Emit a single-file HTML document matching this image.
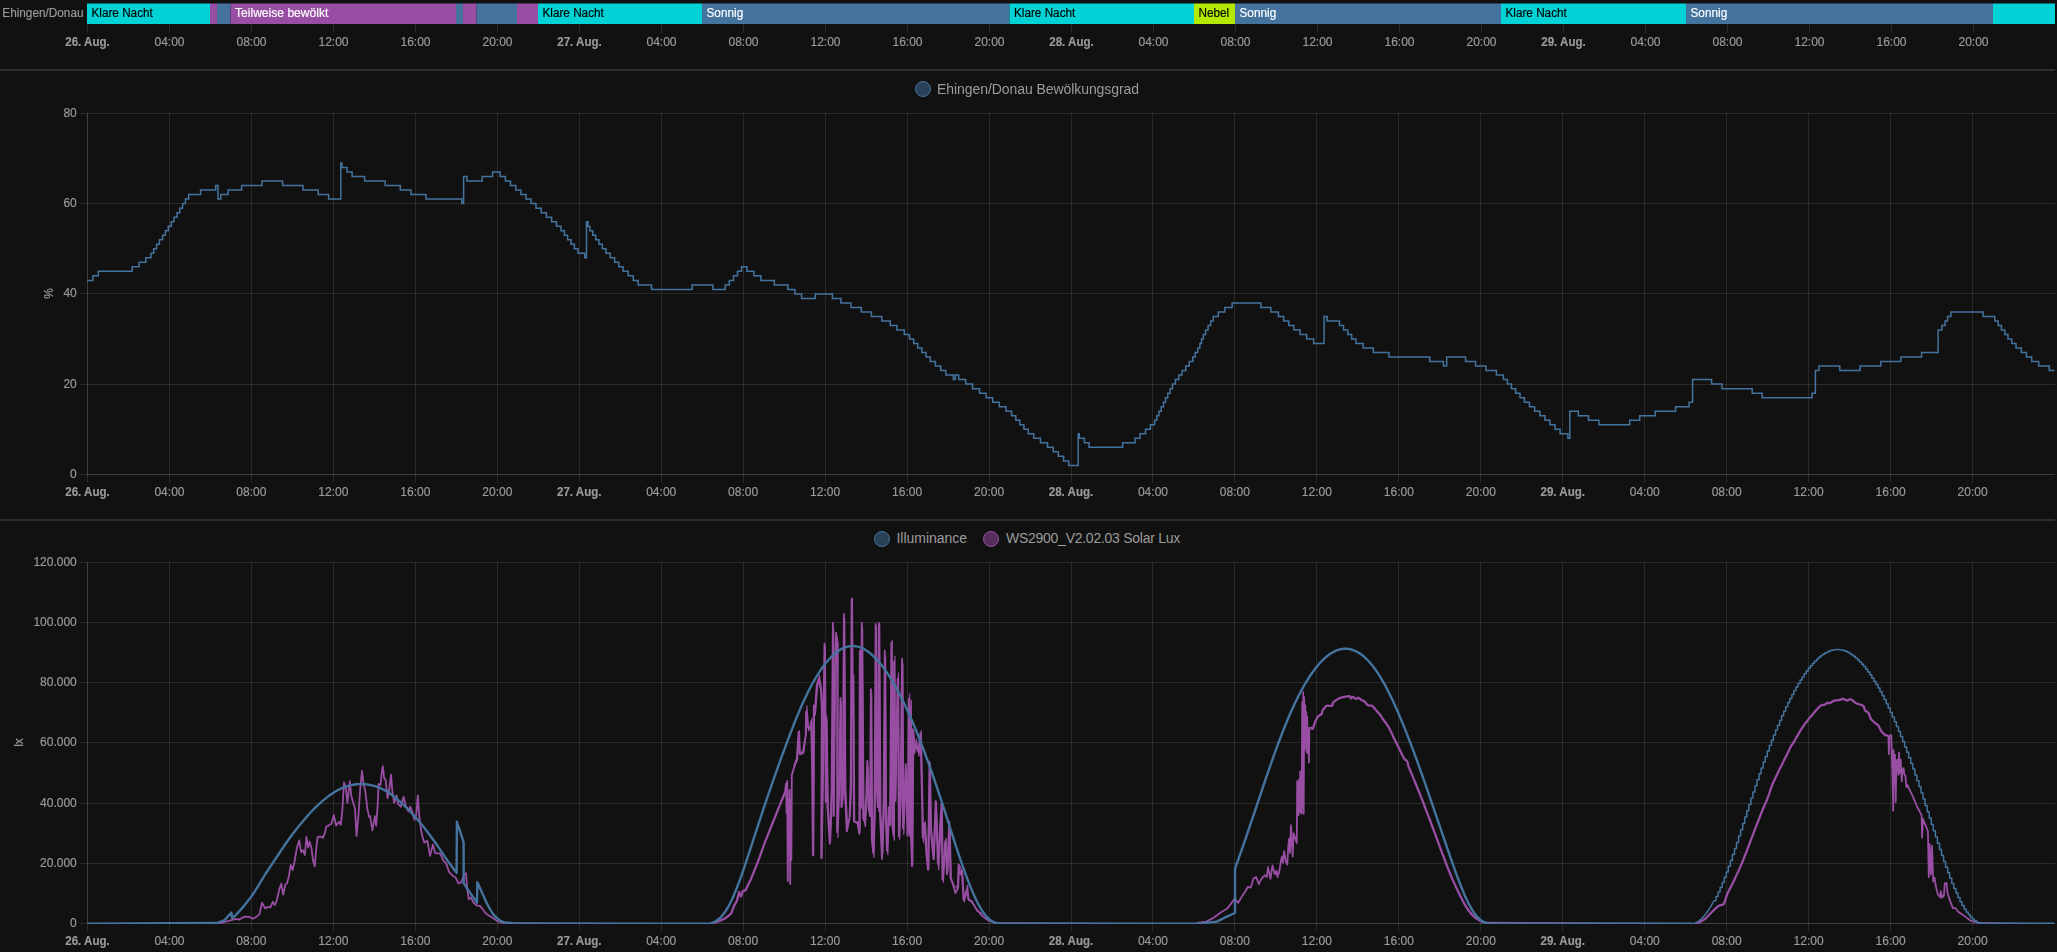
<!DOCTYPE html>
<html><head><meta charset="utf-8"><title>History</title>
<style>
html,body{margin:0;padding:0;background:#111111;width:2057px;height:952px;overflow:hidden}
svg{display:block}
text{font-family:"Liberation Sans",sans-serif}
.g{fill:#e1e1e1;fill-opacity:.12}
body{position:relative}
div.lg{position:absolute;font:14px/16px "Liberation Sans",sans-serif;color:#9b9b9b;white-space:nowrap}
</style></head><body>
<svg width="2057" height="952" viewBox="0 0 2057 952">
<defs><clipPath id="c2"><rect x="87.5" y="555" width="1967.1" height="369"/></clipPath></defs>
<rect width="2057" height="952" fill="#111111"/>
<rect x="87" y="3.5" width="123" height="20.5" fill="#00d2d5"/>
<rect x="210" y="3.5" width="7" height="20.5" fill="#984ea3"/>
<rect x="217" y="3.5" width="13.5" height="20.5" fill="#44739e"/>
<rect x="230.5" y="3.5" width="225.5" height="20.5" fill="#984ea3"/>
<rect x="456" y="3.5" width="7" height="20.5" fill="#44739e"/>
<rect x="463" y="3.5" width="13.5" height="20.5" fill="#984ea3"/>
<rect x="476.5" y="3.5" width="40.5" height="20.5" fill="#44739e"/>
<rect x="517" y="3.5" width="21" height="20.5" fill="#984ea3"/>
<rect x="538" y="3.5" width="164" height="20.5" fill="#00d2d5"/>
<rect x="702" y="3.5" width="307.5" height="20.5" fill="#44739e"/>
<rect x="1009.5" y="3.5" width="184.5" height="20.5" fill="#00d2d5"/>
<rect x="1194" y="3.5" width="41" height="20.5" fill="#b3e900"/>
<rect x="1235" y="3.5" width="266" height="20.5" fill="#44739e"/>
<rect x="1501" y="3.5" width="185" height="20.5" fill="#00d2d5"/>
<rect x="1686" y="3.5" width="307" height="20.5" fill="#44739e"/>
<rect x="1993" y="3.5" width="62" height="20.5" fill="#00d2d5"/>
<rect x="87" y="24" width="1" height="8.8" class="g"/>
<rect x="169" y="24" width="1" height="8.8" class="g"/>
<rect x="251" y="24" width="1" height="8.8" class="g"/>
<rect x="333" y="24" width="1" height="8.8" class="g"/>
<rect x="415" y="24" width="1" height="8.8" class="g"/>
<rect x="497" y="24" width="1" height="8.8" class="g"/>
<rect x="579" y="24" width="1" height="8.8" class="g"/>
<rect x="661" y="24" width="1" height="8.8" class="g"/>
<rect x="743" y="24" width="1" height="8.8" class="g"/>
<rect x="825" y="24" width="1" height="8.8" class="g"/>
<rect x="907" y="24" width="1" height="8.8" class="g"/>
<rect x="989" y="24" width="1" height="8.8" class="g"/>
<rect x="1071" y="24" width="1" height="8.8" class="g"/>
<rect x="1153" y="24" width="1" height="8.8" class="g"/>
<rect x="1235" y="24" width="1" height="8.8" class="g"/>
<rect x="1317" y="24" width="1" height="8.8" class="g"/>
<rect x="1399" y="24" width="1" height="8.8" class="g"/>
<rect x="1481" y="24" width="1" height="8.8" class="g"/>
<rect x="1563" y="24" width="1" height="8.8" class="g"/>
<rect x="1645" y="24" width="1" height="8.8" class="g"/>
<rect x="1727" y="24" width="1" height="8.8" class="g"/>
<rect x="1809" y="24" width="1" height="8.8" class="g"/>
<rect x="1891" y="24" width="1" height="8.8" class="g"/>
<rect x="1973" y="24" width="1" height="8.8" class="g"/>
<rect x="0" y="69" width="2055" height="2" fill="#2e2e2e"/>
<rect x="0" y="519" width="2055" height="2" fill="#2e2e2e"/>
<rect x="87" y="113" width="1" height="369.7" class="g"/>
<rect x="169" y="113" width="1" height="369.7" class="g"/>
<rect x="251" y="113" width="1" height="369.7" class="g"/>
<rect x="333" y="113" width="1" height="369.7" class="g"/>
<rect x="415" y="113" width="1" height="369.7" class="g"/>
<rect x="497" y="113" width="1" height="369.7" class="g"/>
<rect x="579" y="113" width="1" height="369.7" class="g"/>
<rect x="661" y="113" width="1" height="369.7" class="g"/>
<rect x="743" y="113" width="1" height="369.7" class="g"/>
<rect x="825" y="113" width="1" height="369.7" class="g"/>
<rect x="907" y="113" width="1" height="369.7" class="g"/>
<rect x="989" y="113" width="1" height="369.7" class="g"/>
<rect x="1071" y="113" width="1" height="369.7" class="g"/>
<rect x="1152" y="113" width="1" height="369.7" class="g"/>
<rect x="1234" y="113" width="1" height="369.7" class="g"/>
<rect x="1316" y="113" width="1" height="369.7" class="g"/>
<rect x="1398" y="113" width="1" height="369.7" class="g"/>
<rect x="1480" y="113" width="1" height="369.7" class="g"/>
<rect x="1562" y="113" width="1" height="369.7" class="g"/>
<rect x="1644" y="113" width="1" height="369.7" class="g"/>
<rect x="1726" y="113" width="1" height="369.7" class="g"/>
<rect x="1808" y="113" width="1" height="369.7" class="g"/>
<rect x="1890" y="113" width="1" height="369.7" class="g"/>
<rect x="1972" y="113" width="1" height="369.7" class="g"/>
<rect x="87" y="113" width="1" height="362" class="g"/>
<rect x="80" y="113" width="1975" height="1" class="g"/>
<rect x="80" y="203" width="1975" height="1" class="g"/>
<rect x="80" y="293" width="1975" height="1" class="g"/>
<rect x="80" y="384" width="1975" height="1" class="g"/>
<rect x="80" y="474" width="1975" height="1" class="g"/>
<rect x="87" y="474" width="1968" height="1" class="g"/>
<circle cx="923" cy="89" r="7.5" fill="#44739e" fill-opacity="0.5" stroke="#44739e" stroke-width="1"/>
<path d="M87.0 280.4H92.9V275.8H98.3V271.3H132.2V266.8H139.2V262.3H145.8V257.8H150.9V253.3H153.7V248.8H156.6V244.3H159.4V239.7H162.6V235.2H165.4V230.7H168.3V226.2H171.3V221.7H174.0V217.2H177.0V212.7H179.8V208.2H182.6V203.6H185.5V199.1H188.7V194.6H200.6V190.1H215.7V185.6H218.0V199.1H220.8V194.6H228.0V190.1H241.6V185.6H262.0V181.1H282.6V185.6H303.0V190.1H318.2V194.6H328.6V199.1H340.8V163.0H341.9V167.5H347.0V172.1H352.1V176.6H364.6V181.1H385.2V185.6H400.3V190.1H410.9V194.6H426.0V199.1H461.8V203.6H463.6V176.6H467.0V181.1H482.2V176.6H492.6V172.1H500.1V176.6H505.4V181.1H510.5V185.6H515.8V190.1H520.9V194.6H526.0V199.1H531.0V203.6H536.0V208.2H541.2V212.7H546.4V217.2H551.6V221.7H556.5V226.2H561.0V230.7H564.4V235.2H567.6V239.7H571.0V244.3H574.4V248.8H578.0V253.3H584.7V257.8H586.5V221.7H588.0V226.2H589.8V230.7H592.7V235.2H595.7V239.7H598.9V244.3H602.3V248.8H605.9V253.3H610.2V257.8H614.6V262.3H618.8V266.8H623.1V271.3H628.2V275.8H633.3V280.4H638.2V284.9H651.5V289.4H692.1V284.9H712.9V289.4H725.2V284.9H729.3V280.4H733.5V275.8H737.5V271.3H741.6V266.8H746.9V271.3H753.9V275.8H760.9V280.4H774.3V284.9H787.9V289.4H794.9V293.9H801.6V298.4H815.3V293.9H832.4V298.4H840.9V302.9H850.9V307.4H861.3V311.9H871.4V316.5H881.8V321.0H890.3V325.5H896.9V330.0H904.3V334.5H909.5V339.0H913.7V343.5H917.7V348.0H921.8V352.6H926.0V357.1H930.3V361.6H935.4V366.1H940.7V370.6H945.8V375.1H953.4V379.6H955.3V375.1H958.7V379.6H965.7V384.1H972.5V388.7H979.5V393.2H986.1V397.7H992.7V402.2H999.3V406.7H1006.0V411.2H1011.6V415.7H1015.8V420.2H1019.8V424.8H1023.9V429.3H1028.3V433.8H1033.7V438.3H1040.5V442.8H1047.5V447.3H1053.2V451.8H1058.3V456.3H1063.6V460.9H1068.7V465.4H1078.2V433.8H1079.3V438.3H1084.4V442.8H1089.1V447.3H1122.6V442.8H1135.1V438.3H1140.0V433.8H1145.5V429.3H1150.4V424.8H1154.6V420.2H1156.8V415.7H1158.9V411.2H1161.2V406.7H1163.5V402.2H1165.5V397.7H1167.8V393.2H1170.1V388.7H1172.5V384.1H1175.4V379.6H1178.8V375.1H1182.0V370.6H1185.8V366.1H1189.2V361.6H1192.8V357.1H1195.2V352.6H1197.7V348.0H1199.9V343.5H1201.5V339.0H1203.3V334.5H1205.6V330.0H1208.1V325.5H1210.7V321.0H1213.2V316.5H1218.3V311.9H1224.9V307.4H1232.1V302.9H1260.8V307.4H1270.8V311.9H1278.4V316.5H1283.7V321.0H1288.8V325.5H1293.9V330.0H1300.1V334.5H1306.7V339.0H1313.7V343.5H1324.1V316.5H1327.2V321.0H1339.5V325.5H1343.6V330.0H1347.8V334.5H1351.7V339.0H1355.9V343.5H1363.1V348.0H1373.3V352.6H1389.0V357.1H1429.7V361.6H1443.5V366.1H1446.7V357.1H1465.6V361.6H1475.6V366.1H1486.0V370.6H1496.4V375.1H1503.4V379.6H1507.4V384.1H1511.5V388.7H1515.7V393.2H1520.0V397.7H1524.4V402.2H1529.5V406.7H1534.6V411.2H1539.9V415.7H1545.0V420.2H1549.9V424.8H1555.0V429.3H1560.1V433.8H1567.9V438.3H1569.8V411.2H1578.3V415.7H1588.5V420.2H1598.9V424.8H1629.7V420.2H1639.7V415.7H1655.2V411.2H1675.6V406.7H1689.1V402.2H1692.6V379.6H1711.6V384.1H1722.0V388.7H1752.2V393.2H1762.2V397.7H1812.0V393.2H1815.4V370.6H1819.0V366.1H1839.8V370.6H1860.0V366.1H1880.8V361.6H1900.8V357.1H1921.6V352.6H1938.1V330.0H1941.9V325.5H1945.1V321.0H1947.5V316.5H1950.9V311.9H1983.1V316.5H1994.8V321.0H1998.2V325.5H2001.4V330.0H2004.8V334.5H2008.0V339.0H2011.8V343.5H2016.0V348.0H2021.3V352.6H2026.4V357.1H2031.7V361.6H2038.7V366.1H2049.3V370.6H2054.5" fill="none" stroke="#44739e" stroke-width="1.5" stroke-linejoin="miter"/>
<rect x="87" y="562" width="1" height="369.7" class="g"/>
<rect x="169" y="562" width="1" height="369.7" class="g"/>
<rect x="251" y="562" width="1" height="369.7" class="g"/>
<rect x="333" y="562" width="1" height="369.7" class="g"/>
<rect x="415" y="562" width="1" height="369.7" class="g"/>
<rect x="497" y="562" width="1" height="369.7" class="g"/>
<rect x="579" y="562" width="1" height="369.7" class="g"/>
<rect x="661" y="562" width="1" height="369.7" class="g"/>
<rect x="743" y="562" width="1" height="369.7" class="g"/>
<rect x="825" y="562" width="1" height="369.7" class="g"/>
<rect x="907" y="562" width="1" height="369.7" class="g"/>
<rect x="989" y="562" width="1" height="369.7" class="g"/>
<rect x="1071" y="562" width="1" height="369.7" class="g"/>
<rect x="1152" y="562" width="1" height="369.7" class="g"/>
<rect x="1234" y="562" width="1" height="369.7" class="g"/>
<rect x="1316" y="562" width="1" height="369.7" class="g"/>
<rect x="1398" y="562" width="1" height="369.7" class="g"/>
<rect x="1480" y="562" width="1" height="369.7" class="g"/>
<rect x="1562" y="562" width="1" height="369.7" class="g"/>
<rect x="1644" y="562" width="1" height="369.7" class="g"/>
<rect x="1726" y="562" width="1" height="369.7" class="g"/>
<rect x="1808" y="562" width="1" height="369.7" class="g"/>
<rect x="1890" y="562" width="1" height="369.7" class="g"/>
<rect x="1972" y="562" width="1" height="369.7" class="g"/>
<rect x="87" y="562" width="1" height="362" class="g"/>
<rect x="80" y="562" width="1975" height="1" class="g"/>
<rect x="80" y="622" width="1975" height="1" class="g"/>
<rect x="80" y="682" width="1975" height="1" class="g"/>
<rect x="80" y="742" width="1975" height="1" class="g"/>
<rect x="80" y="803" width="1975" height="1" class="g"/>
<rect x="80" y="863" width="1975" height="1" class="g"/>
<rect x="80" y="923" width="1975" height="1" class="g"/>
<rect x="87" y="923" width="1968" height="1" class="g"/>
<circle cx="882" cy="539" r="7.5" fill="#44739e" fill-opacity="0.5" stroke="#44739e" stroke-width="1"/>
<circle cx="991" cy="539" r="7.5" fill="#984ea3" fill-opacity="0.5" stroke="#984ea3" stroke-width="1"/>
<path d="M794.9 762.9L797.6 759.5L799.4 730.6L800.3 754.8L803.8 753.3L806.5 730.5L806.9 705.8L808.7 730.8L811.0 725.7L811.9 718.2L812.8 766.7L813.7 855.0L814.5 709.4L815.4 714.7L817.6 686.3L819.4 675.1L821.7 691.6L822.6 712.3L822.0 858.3L823.7 756.5L825.3 645.6L826.5 796.6L827.0 719.0L828.3 808.2L830.6 841.4L832.4 783.7L833.7 627.4L834.2 815.7L835.4 685.5L836.9 637.4L838.1 644.4L837.9 837.2L840.1 775.5L841.3 701.6L842.2 806.5L843.7 790.9L844.7 618.7L845.8 788.0L847.6 826.9L850.3 814.5L851.5 789.5L852.4 598.2L853.3 716.5L853.8 675.1L854.7 821.5L858.3 821.8L860.1 832.1L860.6 651.7L861.5 808.2L862.6 627.9L864.0 820.0L865.4 826.6L867.2 797.1L868.1 766.6L869.4 809.2L870.8 812.0L871.7 693.4L872.6 844.9L874.0 857.5L875.3 808.0L876.5 626.5L877.6 785.8L878.7 811.1L879.7 623.9L880.8 811.7L882.8 853.7L884.4 804.2L885.6 656.6L886.5 811.1L887.8 854.5L889.5 806.1L890.8 820.8L892.2 640.2L893.1 828.2L894.4 840.2L894.9 656.0L895.8 801.4L898.5 672.9L899.7 839.2L901.2 798.0L902.9 663.3L903.8 834.3L905.6 789.4L906.5 770.3L908.3 833.4L909.7 693.9L910.8 836.9L911.3 700.4L911.9 835.7L912.8 865.0L913.7 730.6L915.1 749.4L916.3 739.2L919.0 756.2L921.3 730.6L922.6 794.8L923.5 842.3L925.3 821.7L927.0 851.3L928.8 869.9L930.3 763.3L931.5 829.7L934.2 859.6L936.5 802.3L938.7 869.6L942.2 803.7L943.1 868.8L943.3 882.3L946.0 838.1L947.8 871.9L950.1 827.3L951.3 878.1L954.0 885.6L956.2 887.2L958.5 887.6L959.4 865.4L961.2 868.5L962.6 872.1L964.4 901.8L967.4 885.1L969.2 900.8L971.9 900.7L977.2 911.3L982.6 913.6" fill="none" stroke="#984ea3" stroke-width="1.2" stroke-linejoin="round" clip-path="url(#c2)"/>
<path d="M87.0 924.2L217.0 924.2L224.6 922.0L231.2 920.1L235.9 918.8L238.8 919.6L244.4 916.7L249.1 916.9L252.9 918.8L256.7 916.7L259.5 914.1L262.0 902.7L265.2 908.4L268.1 906.9L270.3 907.5L272.8 901.8L274.7 905.0L276.6 901.2L279.4 888.9L281.3 883.8L283.2 894.6L285.4 884.6L287.0 883.3L288.8 876.7L290.7 864.9L292.6 870.0L294.5 861.5L296.8 848.3L299.2 840.4L301.1 852.1L303.0 850.2L304.9 854.9L306.4 837.0L308.1 847.4L309.6 841.7L311.5 848.3L313.0 860.6L314.7 866.3L316.3 848.3L317.6 837.0L321.0 836.6L322.9 837.9L324.8 833.2L326.3 826.6L328.5 825.6L331.4 823.7L333.8 815.2L336.1 825.6L338.9 821.8L340.8 824.7L342.2 812.4L344.0 782.5L345.9 787.8L347.4 802.9L349.9 781.2L351.2 795.4L352.7 801.0L355.0 808.6L356.5 836.0L358.4 816.2L360.3 787.8L362.0 770.8L363.5 783.1L365.4 791.6L367.3 808.6L369.2 817.1L370.1 816.2L372.4 830.3L374.9 816.2L376.2 825.6L377.7 804.8L378.6 784.0L380.5 785.0L381.5 774.6L382.8 766.1L384.2 778.4L385.7 780.2L387.6 798.2L389.5 787.8L391.0 774.6L392.3 790.6L394.2 802.9L396.6 795.4L398.0 803.9L400.8 806.7L403.6 796.9L405.5 804.8L408.4 811.4L410.2 806.7L412.5 812.4L414.4 819.9L416.3 814.3L417.8 795.4L419.1 814.3L420.6 827.5L422.5 837.0L424.4 842.6L427.3 840.7L430.1 855.9L432.9 844.5L435.2 853.0L440.5 853.6L443.3 860.6L446.2 863.4L449.0 871.9L452.8 875.7L455.6 877.6L458.4 883.3L461.3 882.3L464.1 874.8L466.0 873.3L467.3 889.9L468.8 899.3L470.7 897.4L473.6 902.7L476.4 905.4L480.2 906.0L483.0 909.7L485.9 913.5L489.6 916.0L493.4 918.2L497.2 921.1L502.9 923.0L712.2 924.2L713.2 923.0" fill="none" stroke="#984ea3" stroke-width="1.8" stroke-linejoin="round" clip-path="url(#c2)"/>
<path d="M713.2 923.0L720.4 920.7L725.7 918.0L731.1 913.6L733.8 906.4L736.8 901.1L739.1 892.1L740.9 896.6L742.7 891.2L745.4 890.4L750.7 879.6L757.9 861.8L765.0 842.1L772.1 824.3L779.3 806.4L782.9 797.5L785.5 791.2L786.2 783.0" fill="none" stroke="#984ea3" stroke-width="2.3" stroke-linejoin="round" clip-path="url(#c2)"/>
<path d="M786.2 783.0L786.6 813.0L787.2 781.0L787.8 881.0L788.4 800.0L789.0 849.0L789.5 790.0L790.2 884.0L790.8 800.0L791.3 860.0L791.8 775.0L793.6 768.9L795.4 763.6L797.1 760.0L794.1 766.1L796.8 758.9L798.6 732.1L799.5 753.6L803.0 751.8L805.7 735.7L806.1 711.6L807.9 726.8L810.2 728.6L811.1 721.4L812.0 760.7L812.9 855.4L813.8 705.4L814.6 715.0L816.8 684.6L818.6 679.3L820.9 690.0L821.8 707.9L821.2 858.0L822.9 753.6L824.5 643.6L825.7 801.8L826.2 715.9L827.5 807.1L829.8 843.8L831.6 789.3L832.9 623.0L833.4 816.1L834.6 682.9L836.1 632.9L837.3 641.8L837.1 832.1L839.3 776.8L840.5 698.0L841.4 807.1L842.9 785.7L843.9 614.1L845.0 792.9L846.8 831.2L849.5 817.9L850.7 783.9L851.6 598.9L852.5 715.0L853.0 677.5L853.9 821.4L857.5 823.2L859.3 833.9L859.8 650.7L860.7 807.1L861.8 623.0L863.2 817.9L864.6 821.4L866.4 792.9L867.3 760.7L868.6 807.1L870.0 816.1L870.9 689.1L871.8 839.3L873.2 852.7L874.5 807.1L875.7 623.9L876.8 789.3L877.9 807.1L878.9 623.0L880.0 814.3L882.0 858.9L883.6 800.0L884.8 650.7L885.7 816.1L887.0 850.9L888.8 807.1L890.0 825.0L891.4 642.7L892.3 825.0L893.6 835.7L894.1 661.4L895.0 800.0L897.7 678.4L898.9 836.6L900.4 800.0L902.1 658.8L903.0 828.6L904.8 789.3L905.7 764.3L907.5 835.7L908.9 698.9L910.0 835.7L910.5 706.1L911.1 839.3L912.0 866.1L912.9 729.3L914.3 753.6L915.5 744.6L918.2 751.8L920.5 732.9L921.8 789.3L922.7 837.5L924.5 823.2L926.2 851.8L928.0 869.6L929.5 761.6L930.7 828.6L933.4 858.9L935.7 800.9L937.9 864.3L941.4 803.6L942.3 869.6L942.5 879.6L945.2 841.2L947.0 874.3L949.3 821.6L950.5 877.9L953.2 885.0L955.4 893.0L957.7 888.6L958.6 864.5L960.4 874.3L961.8 870.7L963.6 900.2L966.6 890.4L968.4 899.3L971.1 901.1L976.4 909.1L981.8 915.4L988.9 920.7L996.1 923.0L1196.1 924.2" fill="none" stroke="#984ea3" stroke-width="1.9" stroke-linejoin="round" clip-path="url(#c2)"/>
<path d="M1196.1 924.2L1197.1 923.0L1206.1 921.6L1213.2 918.0L1220.4 912.7L1227.5 908.2L1232.9 901.1L1234.6 898.4L1238.2 902.9L1241.8 896.6L1245.4 891.2L1248.0 886.8L1250.7 887.7L1253.4 878.8L1256.1 877.0L1258.8 884.1L1261.4 878.8L1265.0 875.2L1266.8 877.0L1268.0 867.1L1270.4 878.8L1272.5 865.4L1274.8 874.3L1276.6 870.7L1277.5 877.0L1279.3 871.6L1281.1 860.0L1282.0 856.4L1282.9 862.7L1284.1 851.1L1285.9 861.8L1287.3 864.5L1288.2 847.5L1289.1 838.6L1290.0 852.9L1290.9 825.2L1292.7 856.4L1293.6 833.2L1295.4 838.6L1296.8 843.0L1297.2 780.9L1297.7 812.4L1298.2 782.2L1298.7 815.0L1299.2 779.2L1299.7 811.5L1300.2 771.5L1300.7 812.3L1301.2 772.8L1301.7 813.4L1302.2 702.2L1302.7 807.5L1303.2 692.2L1303.7 813.8L1304.2 697.1L1304.7 749.5L1305.2 705.2L1305.7 747.5L1306.2 712.0L1306.7 752.0L1307.2 716.6L1307.7 753.4L1308.3 728.0L1308.9 762.5L1309.4 728.3" fill="none" stroke="#984ea3" stroke-width="1.8" stroke-linejoin="round" clip-path="url(#c2)"/>
<path d="M1309.4 728.3L1309.4 728.3L1309.7 728.2L1310.1 728.0L1310.6 727.8L1311.0 727.8L1311.4 728.0L1311.8 728.5L1312.2 728.8L1312.6 728.9L1312.9 728.5L1313.1 727.9L1313.4 727.1L1313.6 726.2L1314.0 725.3L1314.4 724.2L1314.8 723.1L1315.2 722.0L1315.6 721.0L1316.0 720.1L1316.4 719.2L1316.8 718.4L1317.3 717.6L1317.8 716.9L1318.3 716.3L1318.9 715.7L1319.6 715.3L1320.3 715.0L1321.0 714.7L1321.5 714.1L1321.9 713.4L1322.1 712.4L1322.3 711.4L1322.6 710.5L1323.0 709.7L1323.6 709.1L1324.1 708.4L1324.7 707.8L1325.1 707.2L1325.5 706.6L1326.0 706.1L1326.8 705.7L1328.0 705.7L1329.5 705.8L1330.9 705.9L1332.0 705.7L1332.5 705.2L1332.6 704.4L1332.7 703.5L1333.1 702.6L1333.9 701.8L1335.1 700.9L1336.2 700.1L1337.3 699.4L1338.1 698.9L1338.9 698.5L1339.6 698.2L1340.4 697.9L1341.4 697.6L1342.4 697.3L1343.5 697.0L1344.6 696.8L1346.0 696.6L1347.5 696.4L1348.9 696.2L1349.9 696.3L1350.4 696.7L1350.6 697.4L1350.7 698.1L1350.9 698.4L1351.4 698.2L1351.9 697.6L1352.5 697.0L1353.0 696.8L1353.7 697.2L1354.3 697.8L1355.0 698.5L1355.7 698.9L1356.3 698.8L1357.0 698.4L1357.6 698.0L1358.3 697.9L1359.0 698.2L1359.8 698.7L1360.7 699.4L1361.5 700.0L1362.2 700.3L1363.0 700.7L1363.8 701.0L1364.6 701.5L1365.4 702.4L1366.1 703.4L1366.9 704.5L1367.8 705.2L1368.8 705.5L1369.9 705.6L1371.0 705.6L1372.0 705.7L1372.6 706.1L1373.1 706.6L1373.5 707.2L1374.1 707.8L1374.8 708.7L1375.6 709.6L1376.4 710.6L1377.2 711.5L1378.0 712.4L1378.8 713.3L1379.6 714.2L1380.4 715.2L1381.2 716.3L1381.9 717.5L1382.7 718.8L1383.5 719.9L1384.3 721.0L1385.1 722.0L1385.9 723.0L1386.7 724.1L1387.4 725.3L1388.1 726.4L1388.9 727.7L1389.8 729.4L1390.9 731.6L1392.2 734.3L1393.4 737.1L1394.7 739.8L1395.9 742.2L1397.1 744.6L1398.3 746.9L1399.5 749.3L1400.7 751.8L1402.0 754.5L1403.2 756.9L1404.2 758.8L1405.1 759.8L1405.8 760.2L1406.4 760.4L1407.0 761.1L1407.5 762.3L1407.8 763.6L1408.2 765.3L1408.9 767.3L1409.9 769.8L1411.1 772.6L1412.4 775.6L1413.6 778.6L1414.8 781.5L1416.0 784.5L1417.2 787.4L1418.4 790.4L1419.5 793.0L1420.5 795.5L1421.6 798.3L1423.1 802.2L1425.1 807.5L1427.5 813.8L1430.1 820.5L1432.5 827.0L1434.8 833.1L1437.0 839.1L1439.2 845.1L1441.4 851.1L1443.7 857.0L1445.9 863.0L1448.1 868.8L1450.4 874.3L1452.6 879.6L1454.9 884.7L1457.2 889.5L1459.3 893.9L1461.2 897.8L1463.0 901.3L1464.7 904.4L1466.4 907.3L1468.2 910.0L1470.0 912.3L1471.8 914.4L1473.6 916.2L1475.4 917.8L1477.3 919.1L1479.1 920.2L1480.7 921.1L1482.3 921.8L1483.8 922.4L1485.2 922.7L1486.1 923.0L1696.9 924.2L1697.9 923.0L1699.1 922.4L1701.0 921.4L1703.0 920.3L1705.0 918.9L1706.8 917.3L1708.6 915.5L1710.4 913.5L1712.1 911.8L1713.8 910.2L1715.4 908.6L1717.0 907.2L1718.4 906.1L1719.7 905.4L1720.9 905.2L1722.0 905.0L1722.9 904.6L1723.5 904.2L1723.9 903.7L1724.2 903.0L1724.6 902.0L1725.2 900.4L1725.7 898.6L1726.4 896.4L1727.3 893.9L1728.6 891.3L1730.1 888.4L1731.7 885.2L1733.6 881.4L1735.6 877.1L1737.9 872.3L1740.2 867.1L1742.5 861.8L1744.7 856.2L1747.0 850.4L1749.2 844.5L1751.4 838.6L1753.8 832.4L1756.3 825.9L1758.6 820.0L1760.4 815.4L1761.4 812.7L1762.0 811.3L1762.4 810.4L1763.1 808.8L1764.1 806.4L1765.3 803.6L1766.6 800.6L1767.8 797.5L1769.0 794.3L1770.1 790.8L1771.3 787.4L1772.5 784.3L1773.7 781.5L1774.9 778.9L1776.1 776.4L1777.3 773.9L1778.5 771.3L1779.8 768.8L1781.0 766.4L1782.0 764.4L1782.7 762.9L1783.3 761.8L1783.8 760.8L1784.3 759.7L1784.8 758.6L1785.3 757.7L1785.9 756.5L1786.7 755.0L1787.8 752.8L1789.1 750.1L1790.3 747.5L1791.4 745.5L1792.0 744.6L1792.2 744.4L1792.6 744.0L1793.6 742.5L1795.3 739.5L1797.6 735.4L1800.1 731.2L1802.5 727.3L1804.7 724.1L1807.0 721.2L1809.2 718.4L1811.4 715.7L1813.8 712.9L1816.2 710.1L1818.5 707.7L1820.4 705.9L1821.6 705.1L1822.5 705.0L1823.2 705.1L1823.9 705.0L1824.9 704.5L1825.8 703.9L1826.7 703.2L1827.5 702.9L1828.0 702.8L1828.3 703.1L1828.6 703.3L1829.3 703.2L1830.4 702.7L1831.7 701.9L1833.2 701.1L1834.6 700.5L1836.0 700.3L1837.5 700.2L1838.8 700.1L1840.0 700.0L1840.8 699.7L1841.4 699.2L1841.9 698.9L1842.7 698.8L1843.7 699.1L1844.9 699.6L1846.0 700.2L1847.1 700.5L1848.1 700.3L1848.9 699.8L1849.7 699.3L1850.7 699.3L1851.9 699.9L1853.2 701.0L1854.6 702.2L1856.1 703.2L1857.9 703.9L1859.9 704.5L1861.8 705.1L1863.2 705.9L1864.0 706.9L1864.3 708.1L1864.6 709.3L1865.0 710.4L1865.8 711.1L1866.7 711.6L1867.7 712.2L1868.6 713.0L1869.2 714.3L1869.7 715.9L1870.3 717.6L1871.2 719.3L1872.9 721.0L1875.0 722.8L1877.0 724.4L1878.4 725.5L1881.3 731.3L1885.1 735.1L1888.4 735.6" fill="none" stroke="#984ea3" stroke-width="2.3" stroke-linejoin="round" clip-path="url(#c2)"/>
<path d="M1888.4 735.6L1888.9 754.0L1889.4 736.1L1891.3 735.1L1891.9 755.9L1892.7 784.3L1893.2 810.7L1893.6 750.2L1894.4 784.3L1895.0 755.0L1895.7 802.2L1896.5 760.6L1897.4 759.7L1898.4 774.8L1899.0 752.6L1899.8 772.9L1900.7 759.7L1901.7 781.4L1902.6 769.1L1903.6 768.2L1904.5 774.8L1905.4 775.8L1906.4 787.1L1907.8 785.2L1908.8 788.1L1912.5 795.6L1917.3 807.0L1919.8 811.8L1921.6 815.4L1922.1 837.7L1922.9 818.9L1927.0 828.8L1927.9 831.4L1928.8 877.0L1929.6 843.9L1930.9 874.3L1932.0 845.7L1933.2 881.4L1934.6 877.9L1935.9 886.8L1937.7 893.9L1940.4 897.5L1940.7 891.2L1942.1 897.5L1943.9 895.7L1944.8 883.2L1946.6 883.2L1947.5 893.0L1950.2 901.1L1952.9 908.2L1955.5 908.2L1958.2 911.8L1963.6 915.4L1970.7 920.7L1977.9 923.0L2054.5 924.2" fill="none" stroke="#984ea3" stroke-width="1.8" stroke-linejoin="round" clip-path="url(#c2)"/>
<path d="M87.0 923.6L217.0 923.0L224.6 920.1L230.8 913.3L231.4 912.6L232.1 917.9L232.1 917.9L232.8 917.4L233.6 916.9L234.7 916.0L236.0 914.8L237.8 912.9L240.1 910.4L242.9 907.1L245.9 903.5L249.0 899.6L252.0 895.6L254.9 891.2L257.9 886.5L260.8 881.6L263.6 877.0L266.2 872.9L268.4 869.5L270.3 866.6L272.1 864.0L273.8 861.4L275.6 858.7L277.5 855.8L279.4 853.0L281.3 850.1L283.2 847.3L285.1 844.5L287.0 841.8L288.8 839.2L290.7 836.7L292.6 834.1L294.5 831.7L296.4 829.2L298.3 826.8L300.2 824.5L302.1 822.2L304.0 819.9L305.9 817.8L307.8 815.6L309.6 813.5L311.5 811.5L313.4 809.5L315.3 807.6L317.2 805.8L319.1 804.0L321.0 802.3L322.9 800.7L324.8 799.1L326.7 797.6L328.5 796.1L330.4 794.8L332.3 793.5L334.2 792.3L336.1 791.1L338.0 790.0L339.9 789.1L341.8 788.2L343.7 787.4L345.6 786.7L347.4 786.1L349.3 785.6L351.2 785.2L353.1 784.8L355.0 784.5L356.9 784.2L358.8 784.1L360.7 784.0L362.6 784.1L364.5 784.2L366.4 784.4L368.2 784.6L370.1 785.0L372.0 785.4L373.9 785.9L375.8 786.4L377.7 787.1L379.6 787.8L381.6 788.7L383.8 789.8L385.9 790.9L387.7 791.8L389.0 792.5L389.6 792.8L389.4 792.7L389.1 792.6L388.9 792.6L389.5 793.1L390.8 794.1L392.6 795.6L394.7 797.2L396.9 799.0L398.9 800.7L400.8 802.3L402.7 804.0L404.6 805.8L406.5 807.7L408.4 809.5L410.2 811.5L412.1 813.5L414.0 815.6L415.9 817.8L417.8 819.9L419.7 822.2L421.6 824.5L423.5 826.8L425.4 829.2L427.3 831.7L429.1 834.1L431.0 836.7L432.9 839.2L434.8 841.8L436.7 844.5L438.6 847.3L440.4 850.1L442.3 853.0L444.2 855.8L446.2 858.7L448.3 861.8L450.8 865.0L453.1 868.2L455.1 870.9L456.6 872.9L456.9 821.8L463.6 842.2L463.7 883.3L470.7 893.7L477.0 902.7L477.4 882.3L477.4 882.3L478.2 884.1L479.4 886.8L480.7 889.7L482.1 892.7L483.4 895.7L484.9 898.9L486.3 902.1L487.8 905.0L489.2 907.7L490.6 910.2L492.0 912.5L493.4 914.5L494.8 916.1L496.3 917.5L497.7 918.7L499.1 919.8L500.5 920.7L501.8 921.4L503.2 921.9L504.8 922.4L506.7 922.7L508.9 922.8L510.9 922.9L512.3 923.0L513.3 923.6L706.6 923.6L707.6 923.6L708.6 923.6L709.6 923.6L710.6 923.3L711.6 923.1L712.6 922.7L713.6 922.3L714.6 921.8L715.6 921.3L716.6 920.6L717.6 919.9L718.6 919.1L719.6 918.3L720.6 917.3L721.6 916.3L722.6 915.1L723.6 913.9L724.6 912.5L725.6 911.1L726.6 909.5L727.6 907.9L728.6 906.1L729.6 904.2L730.6 902.3L731.6 900.2L732.6 898.0L733.6 895.8L734.6 893.4L735.6 891.0L736.6 888.5L737.6 885.9L738.6 883.3L739.6 880.6L740.6 877.9L741.6 875.1L742.6 872.2L743.6 869.3L744.6 866.4L745.6 863.4L746.6 860.4L747.6 857.4L748.6 854.4L749.6 851.3L750.6 848.2L751.6 845.2L752.6 842.1L753.6 839.0L754.6 835.9L755.6 832.8L756.6 829.8L757.6 826.7L758.6 823.7L759.6 820.6L760.6 817.6L761.6 814.5L762.6 811.5L763.6 808.5L764.6 805.5L765.6 802.5L766.6 799.6L767.6 796.6L768.6 793.7L769.6 790.8L770.6 787.9L771.6 785.0L772.6 782.1L773.6 779.3L774.6 776.4L775.6 773.6L776.6 770.8L777.6 768.0L778.6 765.2L779.6 762.4L780.6 759.7L781.6 756.9L782.6 754.2L783.6 751.5L784.6 748.8L785.6 746.1L786.6 743.4L787.6 740.7L788.6 738.1L789.6 735.4L790.6 732.8L791.6 730.2L792.6 727.6L793.6 725.0L794.6 722.5L795.6 720.0L796.6 717.5L797.6 715.1L798.6 712.7L799.6 710.3L800.6 708.0L801.6 705.7L802.6 703.5L803.6 701.3L804.6 699.2L805.6 697.0L806.6 695.0L807.6 692.9L808.6 690.9L809.6 689.0L810.6 687.0L811.6 685.2L812.6 683.3L813.6 681.5L814.6 679.8L815.6 678.1L816.6 676.4L817.6 674.8L818.6 673.2L819.6 671.7L820.6 670.2L821.6 668.7L822.6 667.3L823.6 665.9L824.6 664.6L825.6 663.3L826.6 662.1L827.6 660.9L828.6 659.7L829.6 658.6L830.6 657.6L831.6 656.6L832.6 655.6L833.6 654.7L834.6 653.8L835.6 653.0L836.6 652.2L837.6 651.4L838.6 650.7L839.6 650.1L840.6 649.5L841.6 648.9L842.6 648.4L843.6 648.0L844.6 647.6L845.6 647.2L846.6 646.9L847.6 646.6L848.6 646.4L849.6 646.2L850.6 646.1L851.6 646.0L852.6 646.0L853.6 646.1L854.6 646.1L855.6 646.3L856.6 646.4L857.6 646.6L858.6 646.9L859.6 647.2L860.6 647.6L861.6 648.0L862.6 648.4L863.6 648.9L864.6 649.5L865.6 650.0L866.6 650.7L867.6 651.3L868.6 652.1L869.6 652.8L870.6 653.6L871.6 654.5L872.6 655.4L873.6 656.3L874.6 657.3L875.6 658.3L876.6 659.3L877.6 660.4L878.6 661.6L879.6 662.7L880.6 664.0L881.6 665.2L882.6 666.5L883.6 667.8L884.6 669.2L885.6 670.6L886.6 672.1L887.6 673.6L888.6 675.1L889.6 676.7L890.6 678.3L891.6 679.9L892.6 681.6L893.6 683.3L894.6 685.0L895.6 686.8L896.6 688.6L897.6 690.5L898.6 692.3L899.6 694.3L900.6 696.2L901.6 698.2L902.6 700.2L903.6 702.3L904.6 704.3L905.6 706.5L906.6 708.6L907.6 710.8L908.6 713.0L909.6 715.2L910.6 717.5L911.6 719.8L912.6 722.1L913.6 724.5L914.6 726.9L915.6 729.3L916.6 731.8L917.6 734.2L918.6 736.7L919.6 739.3L920.6 741.8L921.6 744.4L922.6 747.0L923.6 749.7L924.6 752.3L925.6 755.0L926.6 757.8L927.6 760.5L928.6 763.3L929.6 766.1L930.6 768.9L931.6 771.7L932.6 774.6L933.6 777.5L934.6 780.4L935.6 783.3L936.6 786.3L937.6 789.3L938.6 792.3L939.6 795.3L940.6 798.3L941.6 801.4L942.6 804.5L943.6 807.6L944.6 810.7L945.6 813.8L946.6 816.9L947.6 820.1L948.6 823.2L949.6 826.4L950.6 829.5L951.6 832.6L952.6 835.7L953.6 838.8L954.6 841.9L955.6 845.0L956.6 848.1L957.6 851.1L958.6 854.1L959.6 857.1L960.6 860.0L961.6 862.9L962.6 865.8L963.6 868.6L964.6 871.4L965.6 874.2L966.6 876.9L967.6 879.5L968.6 882.1L969.6 884.7L970.6 887.2L971.6 889.6L972.6 891.9L973.6 894.2L974.6 896.4L975.6 898.6L976.6 900.7L977.6 902.7L978.6 904.6L979.6 906.4L980.6 908.1L981.6 909.8L982.6 911.3L983.6 912.8L984.6 914.2L985.6 915.5L986.6 916.6L987.6 917.7L988.6 918.6L989.6 919.5L990.6 920.2L991.6 920.9L992.6 921.5L993.6 922.0L994.6 922.4L995.6 922.8L996.6 923.1L997.6 923.3L998.6 923.5L999.6 923.6L1000.6 923.6L1001.6 923.6L1002.6 923.6L1203.3 923.6L1204.3 923.0L1216.8 921.6L1225.7 917.1L1235.0 913.0L1235.0 868.5L1236.0 865.8L1237.0 863.0L1238.0 860.3L1239.0 857.5L1240.0 854.7L1241.0 851.8L1242.0 849.0L1243.0 846.1L1244.0 843.2L1245.0 840.3L1246.0 837.4L1247.0 834.5L1248.0 831.6L1249.0 828.6L1250.0 825.7L1251.0 822.7L1252.0 819.7L1253.0 816.7L1254.0 813.8L1255.0 810.8L1256.0 807.8L1257.0 804.8L1258.0 801.8L1259.0 798.8L1260.0 795.9L1261.0 792.9L1262.0 789.9L1263.0 786.9L1264.0 784.0L1265.0 781.0L1266.0 778.1L1267.0 775.2L1268.0 772.3L1269.0 769.4L1270.0 766.5L1271.0 763.6L1272.0 760.8L1273.0 758.0L1274.0 755.2L1275.0 752.4L1276.0 749.6L1277.0 746.9L1278.0 744.2L1279.0 741.5L1280.0 738.8L1281.0 736.2L1282.0 733.6L1283.0 731.0L1284.0 728.5L1285.0 726.0L1286.0 723.6L1287.0 721.1L1288.0 718.7L1289.0 716.4L1290.0 714.1L1291.0 711.8L1292.0 709.6L1293.0 707.4L1294.0 705.2L1295.0 703.1L1296.0 701.0L1297.0 699.0L1298.0 696.9L1299.0 695.0L1300.0 693.1L1301.0 691.2L1302.0 689.3L1303.0 687.5L1304.0 685.7L1305.0 684.0L1306.0 682.3L1307.0 680.7L1308.0 679.0L1309.0 677.5L1310.0 675.9L1311.0 674.5L1312.0 673.0L1313.0 671.6L1314.0 670.2L1315.0 668.9L1316.0 667.6L1317.0 666.4L1318.0 665.2L1319.0 664.0L1320.0 662.9L1321.0 661.8L1322.0 660.8L1323.0 659.8L1324.0 658.8L1325.0 657.9L1326.0 657.0L1327.0 656.2L1328.0 655.4L1329.0 654.7L1330.0 654.0L1331.0 653.3L1332.0 652.7L1333.0 652.2L1334.0 651.6L1335.0 651.2L1336.0 650.7L1337.0 650.3L1338.0 650.0L1339.0 649.7L1340.0 649.4L1341.0 649.2L1342.0 649.0L1343.0 648.9L1344.0 648.8L1345.0 648.8L1346.0 648.8L1347.0 648.8L1348.0 648.9L1349.0 649.0L1350.0 649.2L1351.0 649.5L1352.0 649.7L1353.0 650.1L1354.0 650.4L1355.0 650.9L1356.0 651.3L1357.0 651.8L1358.0 652.4L1359.0 653.0L1360.0 653.6L1361.0 654.3L1362.0 655.1L1363.0 655.8L1364.0 656.7L1365.0 657.6L1366.0 658.5L1367.0 659.5L1368.0 660.5L1369.0 661.6L1370.0 662.7L1371.0 663.9L1372.0 665.1L1373.0 666.3L1374.0 667.7L1375.0 669.0L1376.0 670.4L1377.0 671.9L1378.0 673.4L1379.0 674.9L1380.0 676.5L1381.0 678.2L1382.0 679.9L1383.0 681.6L1384.0 683.4L1385.0 685.2L1386.0 687.0L1387.0 688.9L1388.0 690.9L1389.0 692.8L1390.0 694.9L1391.0 696.9L1392.0 699.0L1393.0 701.1L1394.0 703.3L1395.0 705.5L1396.0 707.7L1397.0 709.9L1398.0 712.2L1399.0 714.6L1400.0 716.9L1401.0 719.3L1402.0 721.7L1403.0 724.1L1404.0 726.6L1405.0 729.1L1406.0 731.6L1407.0 734.1L1408.0 736.7L1409.0 739.3L1410.0 741.9L1411.0 744.5L1412.0 747.2L1413.0 749.9L1414.0 752.5L1415.0 755.3L1416.0 758.0L1417.0 760.7L1418.0 763.5L1419.0 766.3L1420.0 769.1L1421.0 771.9L1422.0 774.7L1423.0 777.5L1424.0 780.4L1425.0 783.2L1426.0 786.1L1427.0 789.0L1428.0 791.9L1429.0 794.8L1430.0 797.7L1431.0 800.6L1432.0 803.5L1433.0 806.4L1434.0 809.3L1435.0 812.3L1436.0 815.2L1437.0 818.1L1438.0 821.1L1439.0 824.0L1440.0 826.9L1441.0 829.8L1442.0 832.8L1443.0 835.7L1444.0 838.6L1445.0 841.5L1446.0 844.5L1447.0 847.4L1448.0 850.3L1449.0 853.2L1450.0 856.1L1451.0 858.9L1452.0 861.8L1453.0 864.6L1454.0 867.5L1455.0 870.3L1456.0 873.0L1457.0 875.8L1458.0 878.5L1459.0 881.1L1460.0 883.7L1461.0 886.3L1462.0 888.8L1463.0 891.2L1464.0 893.6L1465.0 895.9L1466.0 898.1L1467.0 900.3L1468.0 902.3L1469.0 904.3L1470.0 906.2L1471.0 907.9L1472.0 909.6L1473.0 911.2L1474.0 912.7L1475.0 914.0L1476.0 915.3L1477.0 916.5L1478.0 917.6L1479.0 918.5L1480.0 919.4L1481.0 920.2L1482.0 920.9L1483.0 921.6L1484.0 922.1L1485.0 922.6L1486.0 923.0L1487.0 923.3L1488.0 923.5L1489.0 923.6L1490.0 923.6L1491.0 923.6L1492.0 923.6L1493.0 923.6L1494.0 923.6L1495.0 923.6L1691.3 923.6L1692.3 923.6" fill="none" stroke="#44739e" stroke-width="2.4" stroke-linejoin="round" clip-path="url(#c2)"/>
<path d="M1692.3 923.6L1693.8 923.5L1695.3 923.0L1696.8 922.2L1698.3 921.3L1699.8 920.2L1701.3 918.9L1702.8 917.4L1704.3 915.7L1705.8 913.9L1707.3 911.8L1708.8 909.6L1710.3 907.3L1711.8 904.7L1713.3 902.0L1714.0 900.7L1716.0 900.7L1716.0 896.5L1718.1 896.5L1718.1 892.1L1720.1 892.1L1720.1 887.4L1722.2 887.4L1722.2 882.5L1724.2 882.5L1724.2 877.3L1726.3 877.3L1726.3 871.9L1728.3 871.9L1728.3 866.3L1730.4 866.3L1730.4 860.5L1732.4 860.5L1732.4 854.6L1734.5 854.6L1734.5 848.5L1736.5 848.5L1736.5 842.4L1738.6 842.4L1738.6 836.1L1740.6 836.1L1740.6 829.8L1742.7 829.8L1742.7 823.5L1744.7 823.5L1744.7 817.1L1746.8 817.1L1746.8 810.7L1748.8 810.7L1748.8 804.4L1750.9 804.4L1750.9 798.1L1752.9 798.1L1752.9 791.9L1755.0 791.9L1755.0 785.7L1757.0 785.7L1757.0 779.7L1759.1 779.7L1759.1 773.7L1761.1 773.7L1761.1 767.9L1763.2 767.9L1763.2 762.1L1765.2 762.1L1765.2 756.5L1767.3 756.5L1767.3 751.0L1769.3 751.0L1769.3 745.6L1771.4 745.6L1771.4 740.3L1773.4 740.3L1773.4 735.1L1775.5 735.1L1775.5 730.1L1777.5 730.1L1777.5 725.2L1779.6 725.2L1779.6 720.4L1781.6 720.4L1781.6 715.7L1783.7 715.7L1783.7 711.2L1785.7 711.2L1785.7 706.8L1787.8 706.8L1787.8 702.5L1789.8 702.5L1789.8 698.4L1791.9 698.4L1791.9 694.4L1793.9 694.4L1793.9 690.6L1796.0 690.6L1796.0 687.0L1798.0 687.0L1798.0 683.4L1800.1 683.4L1800.1 680.1L1802.1 680.1L1802.1 676.9L1804.2 676.9L1804.2 673.8L1806.2 673.8L1806.2 671.0L1808.3 671.0L1808.3 668.3L1810.3 668.3L1810.3 665.7L1812.4 665.7L1812.4 663.4L1814.4 663.4L1814.4 661.2L1816.5 661.2L1816.5 659.2L1818.5 659.2L1818.5 657.3L1820.6 657.3L1820.6 655.7L1822.6 655.7L1822.6 654.2L1824.7 654.2L1824.7 653.0L1826.7 653.0L1826.7 651.9L1828.8 651.9L1828.8 651.0L1830.8 651.0L1830.8 650.3L1832.9 650.3L1832.9 649.9L1834.9 649.9L1834.9 649.6L1837.0 649.6L1837.0 649.5L1839.0 649.5L1839.0 649.7L1841.1 649.7L1841.1 650.0L1843.1 650.0L1843.1 650.6L1845.2 650.6L1845.2 651.3L1847.2 651.3L1847.2 652.3L1849.3 652.3L1849.3 653.4L1851.3 653.4L1851.3 654.7L1853.4 654.7L1853.4 656.3L1855.4 656.3L1855.4 658.0L1857.5 658.0L1857.5 659.9L1859.5 659.9L1859.5 661.9L1861.6 661.9L1861.6 664.2L1863.6 664.2L1863.6 666.6L1865.7 666.6L1865.7 669.2L1867.7 669.2L1867.7 671.9L1869.8 671.9L1869.8 674.8L1871.8 674.8L1871.8 677.9L1873.9 677.9L1873.9 681.2L1875.9 681.2L1875.9 684.6L1878.0 684.6L1878.0 688.1L1880.0 688.1L1880.0 691.8L1882.1 691.8L1882.1 695.7L1884.1 695.7L1884.1 699.6L1886.2 699.6L1886.2 703.8L1888.2 703.8L1888.2 708.0L1890.3 708.0L1890.3 712.5L1892.3 712.5L1892.3 717.0L1894.4 717.0L1894.4 721.7L1896.4 721.7L1896.4 726.5L1898.5 726.5L1898.5 731.4L1900.5 731.4L1900.5 736.4L1902.6 736.4L1902.6 741.6L1904.6 741.6L1904.6 746.9L1906.7 746.9L1906.7 752.3L1908.7 752.3L1908.7 757.8L1910.8 757.8L1910.8 763.4L1912.8 763.4L1912.8 769.1L1914.9 769.1L1914.9 774.9L1916.9 774.9L1916.9 780.8L1919.0 780.8L1919.0 786.8L1921.0 786.8L1921.0 792.9L1923.1 792.9L1923.1 799.1L1925.1 799.1L1925.1 805.4L1927.2 805.4L1927.2 811.7L1929.2 811.7L1929.2 818.0L1931.3 818.0L1931.3 824.4L1933.3 824.4L1933.3 830.7L1935.4 830.7L1935.4 837.0L1937.4 837.0L1937.4 843.3L1939.5 843.3L1939.5 849.4L1941.5 849.4L1941.5 855.5L1943.6 855.5L1943.6 861.4L1945.6 861.4L1945.6 867.2L1947.7 867.2L1947.7 872.8L1949.7 872.8L1949.7 878.3L1951.8 878.3L1951.8 883.5L1953.8 883.5L1953.8 888.4L1955.9 888.4L1955.9 893.1L1957.9 893.1L1957.9 897.5L1960.0 897.5L1960.0 901.7L1962.0 901.7L1962.0 905.4L1964.1 905.4L1964.1 908.9L1966.1 908.9L1966.1 911.9L1968.2 911.9L1968.2 914.6L1970.2 914.6L1970.2 917.0L1972.3 917.0L1972.3 919.0L1974.3 919.0L1974.3 920.7L1976.4 920.7L1976.4 922.0L1978.4 922.0L1978.4 923.0L1980.5 923.0L1980.5 923.6L1982.5 923.6L1982.5 923.6" fill="none" stroke="#44739e" stroke-width="1.5" stroke-linejoin="round" clip-path="url(#c2)"/>
<path d="M1979.5 923.6L2054.5 923.6" fill="none" stroke="#44739e" stroke-width="2.4" stroke-linejoin="round" clip-path="url(#c2)"/>
<g opacity="0.999">
<text stroke="#000" stroke-width="0.18" x="91.5" y="17.2" font-size="12" fill="#000" class="tl" textLength="61.3" lengthAdjust="spacingAndGlyphs">Klare Nacht</text>
<text stroke="#fff" stroke-width="0.18" x="235.0" y="17.2" font-size="12" fill="#fff" class="tl" textLength="93.4" lengthAdjust="spacingAndGlyphs">Teilweise bewölkt</text>
<text stroke="#000" stroke-width="0.18" x="542.5" y="17.2" font-size="12" fill="#000" class="tl" textLength="61.3" lengthAdjust="spacingAndGlyphs">Klare Nacht</text>
<text stroke="#fff" stroke-width="0.18" x="706.5" y="17.2" font-size="12" fill="#fff" class="tl" textLength="36.7" lengthAdjust="spacingAndGlyphs">Sonnig</text>
<text stroke="#000" stroke-width="0.18" x="1014.0" y="17.2" font-size="12" fill="#000" class="tl" textLength="61.3" lengthAdjust="spacingAndGlyphs">Klare Nacht</text>
<text stroke="#000" stroke-width="0.18" x="1198.5" y="17.2" font-size="12" fill="#000" class="tl" textLength="30.7" lengthAdjust="spacingAndGlyphs">Nebel</text>
<text stroke="#fff" stroke-width="0.18" x="1239.5" y="17.2" font-size="12" fill="#fff" class="tl" textLength="36.7" lengthAdjust="spacingAndGlyphs">Sonnig</text>
<text stroke="#000" stroke-width="0.18" x="1505.5" y="17.2" font-size="12" fill="#000" class="tl" textLength="61.3" lengthAdjust="spacingAndGlyphs">Klare Nacht</text>
<text stroke="#fff" stroke-width="0.18" x="1690.5" y="17.2" font-size="12" fill="#fff" class="tl" textLength="36.7" lengthAdjust="spacingAndGlyphs">Sonnig</text>
<text stroke="#9b9b9b" stroke-width="0.18" x="2.3" y="17.2" font-size="12" fill="#9b9b9b" class="tl" textLength="81.2" lengthAdjust="spacingAndGlyphs">Ehingen/Donau</text>
<text stroke="#9b9b9b" stroke-width="0.18" x="87.5" y="45.8" font-size="12" font-weight="bold" text-anchor="middle" fill="#9b9b9b" textLength="44.5" lengthAdjust="spacingAndGlyphs">26. Aug.</text>
<text stroke="#9b9b9b" stroke-width="0.18" x="169.5" y="45.8" font-size="12" text-anchor="middle" fill="#9b9b9b" textLength="30.1" lengthAdjust="spacingAndGlyphs">04:00</text>
<text stroke="#9b9b9b" stroke-width="0.18" x="251.5" y="45.8" font-size="12" text-anchor="middle" fill="#9b9b9b" textLength="30.1" lengthAdjust="spacingAndGlyphs">08:00</text>
<text stroke="#9b9b9b" stroke-width="0.18" x="333.5" y="45.8" font-size="12" text-anchor="middle" fill="#9b9b9b" textLength="30.1" lengthAdjust="spacingAndGlyphs">12:00</text>
<text stroke="#9b9b9b" stroke-width="0.18" x="415.5" y="45.8" font-size="12" text-anchor="middle" fill="#9b9b9b" textLength="30.1" lengthAdjust="spacingAndGlyphs">16:00</text>
<text stroke="#9b9b9b" stroke-width="0.18" x="497.5" y="45.8" font-size="12" text-anchor="middle" fill="#9b9b9b" textLength="30.1" lengthAdjust="spacingAndGlyphs">20:00</text>
<text stroke="#9b9b9b" stroke-width="0.18" x="579.5" y="45.8" font-size="12" font-weight="bold" text-anchor="middle" fill="#9b9b9b" textLength="44.5" lengthAdjust="spacingAndGlyphs">27. Aug.</text>
<text stroke="#9b9b9b" stroke-width="0.18" x="661.5" y="45.8" font-size="12" text-anchor="middle" fill="#9b9b9b" textLength="30.1" lengthAdjust="spacingAndGlyphs">04:00</text>
<text stroke="#9b9b9b" stroke-width="0.18" x="743.5" y="45.8" font-size="12" text-anchor="middle" fill="#9b9b9b" textLength="30.1" lengthAdjust="spacingAndGlyphs">08:00</text>
<text stroke="#9b9b9b" stroke-width="0.18" x="825.5" y="45.8" font-size="12" text-anchor="middle" fill="#9b9b9b" textLength="30.1" lengthAdjust="spacingAndGlyphs">12:00</text>
<text stroke="#9b9b9b" stroke-width="0.18" x="907.5" y="45.8" font-size="12" text-anchor="middle" fill="#9b9b9b" textLength="30.1" lengthAdjust="spacingAndGlyphs">16:00</text>
<text stroke="#9b9b9b" stroke-width="0.18" x="989.5" y="45.8" font-size="12" text-anchor="middle" fill="#9b9b9b" textLength="30.1" lengthAdjust="spacingAndGlyphs">20:00</text>
<text stroke="#9b9b9b" stroke-width="0.18" x="1071.5" y="45.8" font-size="12" font-weight="bold" text-anchor="middle" fill="#9b9b9b" textLength="44.5" lengthAdjust="spacingAndGlyphs">28. Aug.</text>
<text stroke="#9b9b9b" stroke-width="0.18" x="1153.5" y="45.8" font-size="12" text-anchor="middle" fill="#9b9b9b" textLength="30.1" lengthAdjust="spacingAndGlyphs">04:00</text>
<text stroke="#9b9b9b" stroke-width="0.18" x="1235.5" y="45.8" font-size="12" text-anchor="middle" fill="#9b9b9b" textLength="30.1" lengthAdjust="spacingAndGlyphs">08:00</text>
<text stroke="#9b9b9b" stroke-width="0.18" x="1317.5" y="45.8" font-size="12" text-anchor="middle" fill="#9b9b9b" textLength="30.1" lengthAdjust="spacingAndGlyphs">12:00</text>
<text stroke="#9b9b9b" stroke-width="0.18" x="1399.5" y="45.8" font-size="12" text-anchor="middle" fill="#9b9b9b" textLength="30.1" lengthAdjust="spacingAndGlyphs">16:00</text>
<text stroke="#9b9b9b" stroke-width="0.18" x="1481.5" y="45.8" font-size="12" text-anchor="middle" fill="#9b9b9b" textLength="30.1" lengthAdjust="spacingAndGlyphs">20:00</text>
<text stroke="#9b9b9b" stroke-width="0.18" x="1563.5" y="45.8" font-size="12" font-weight="bold" text-anchor="middle" fill="#9b9b9b" textLength="44.5" lengthAdjust="spacingAndGlyphs">29. Aug.</text>
<text stroke="#9b9b9b" stroke-width="0.18" x="1645.5" y="45.8" font-size="12" text-anchor="middle" fill="#9b9b9b" textLength="30.1" lengthAdjust="spacingAndGlyphs">04:00</text>
<text stroke="#9b9b9b" stroke-width="0.18" x="1727.5" y="45.8" font-size="12" text-anchor="middle" fill="#9b9b9b" textLength="30.1" lengthAdjust="spacingAndGlyphs">08:00</text>
<text stroke="#9b9b9b" stroke-width="0.18" x="1809.5" y="45.8" font-size="12" text-anchor="middle" fill="#9b9b9b" textLength="30.1" lengthAdjust="spacingAndGlyphs">12:00</text>
<text stroke="#9b9b9b" stroke-width="0.18" x="1891.5" y="45.8" font-size="12" text-anchor="middle" fill="#9b9b9b" textLength="30.1" lengthAdjust="spacingAndGlyphs">16:00</text>
<text stroke="#9b9b9b" stroke-width="0.18" x="1973.5" y="45.8" font-size="12" text-anchor="middle" fill="#9b9b9b" textLength="30.1" lengthAdjust="spacingAndGlyphs">20:00</text>
<text stroke="#9b9b9b" stroke-width="0.18" x="76.8" y="117.0" font-size="12" text-anchor="end" fill="#9b9b9b">80</text>
<text stroke="#9b9b9b" stroke-width="0.18" x="76.8" y="207.0" font-size="12" text-anchor="end" fill="#9b9b9b">60</text>
<text stroke="#9b9b9b" stroke-width="0.18" x="76.8" y="297.0" font-size="12" text-anchor="end" fill="#9b9b9b">40</text>
<text stroke="#9b9b9b" stroke-width="0.18" x="76.8" y="388.0" font-size="12" text-anchor="end" fill="#9b9b9b">20</text>
<text stroke="#9b9b9b" stroke-width="0.18" x="76.8" y="478.0" font-size="12" text-anchor="end" fill="#9b9b9b">0</text>
<text stroke="#9b9b9b" stroke-width="0.18" x="87.5" y="495.8" font-size="12" font-weight="bold" text-anchor="middle" fill="#9b9b9b" textLength="44.5" lengthAdjust="spacingAndGlyphs">26. Aug.</text>
<text stroke="#9b9b9b" stroke-width="0.18" x="169.45999999999998" y="495.8" font-size="12" text-anchor="middle" fill="#9b9b9b" textLength="30.1" lengthAdjust="spacingAndGlyphs">04:00</text>
<text stroke="#9b9b9b" stroke-width="0.18" x="251.42" y="495.8" font-size="12" text-anchor="middle" fill="#9b9b9b" textLength="30.1" lengthAdjust="spacingAndGlyphs">08:00</text>
<text stroke="#9b9b9b" stroke-width="0.18" x="333.38" y="495.8" font-size="12" text-anchor="middle" fill="#9b9b9b" textLength="30.1" lengthAdjust="spacingAndGlyphs">12:00</text>
<text stroke="#9b9b9b" stroke-width="0.18" x="415.34" y="495.8" font-size="12" text-anchor="middle" fill="#9b9b9b" textLength="30.1" lengthAdjust="spacingAndGlyphs">16:00</text>
<text stroke="#9b9b9b" stroke-width="0.18" x="497.29999999999995" y="495.8" font-size="12" text-anchor="middle" fill="#9b9b9b" textLength="30.1" lengthAdjust="spacingAndGlyphs">20:00</text>
<text stroke="#9b9b9b" stroke-width="0.18" x="579.26" y="495.8" font-size="12" font-weight="bold" text-anchor="middle" fill="#9b9b9b" textLength="44.5" lengthAdjust="spacingAndGlyphs">27. Aug.</text>
<text stroke="#9b9b9b" stroke-width="0.18" x="661.2199999999999" y="495.8" font-size="12" text-anchor="middle" fill="#9b9b9b" textLength="30.1" lengthAdjust="spacingAndGlyphs">04:00</text>
<text stroke="#9b9b9b" stroke-width="0.18" x="743.18" y="495.8" font-size="12" text-anchor="middle" fill="#9b9b9b" textLength="30.1" lengthAdjust="spacingAndGlyphs">08:00</text>
<text stroke="#9b9b9b" stroke-width="0.18" x="825.14" y="495.8" font-size="12" text-anchor="middle" fill="#9b9b9b" textLength="30.1" lengthAdjust="spacingAndGlyphs">12:00</text>
<text stroke="#9b9b9b" stroke-width="0.18" x="907.0999999999999" y="495.8" font-size="12" text-anchor="middle" fill="#9b9b9b" textLength="30.1" lengthAdjust="spacingAndGlyphs">16:00</text>
<text stroke="#9b9b9b" stroke-width="0.18" x="989.06" y="495.8" font-size="12" text-anchor="middle" fill="#9b9b9b" textLength="30.1" lengthAdjust="spacingAndGlyphs">20:00</text>
<text stroke="#9b9b9b" stroke-width="0.18" x="1071.02" y="495.8" font-size="12" font-weight="bold" text-anchor="middle" fill="#9b9b9b" textLength="44.5" lengthAdjust="spacingAndGlyphs">28. Aug.</text>
<text stroke="#9b9b9b" stroke-width="0.18" x="1152.98" y="495.8" font-size="12" text-anchor="middle" fill="#9b9b9b" textLength="30.1" lengthAdjust="spacingAndGlyphs">04:00</text>
<text stroke="#9b9b9b" stroke-width="0.18" x="1234.9399999999998" y="495.8" font-size="12" text-anchor="middle" fill="#9b9b9b" textLength="30.1" lengthAdjust="spacingAndGlyphs">08:00</text>
<text stroke="#9b9b9b" stroke-width="0.18" x="1316.8999999999999" y="495.8" font-size="12" text-anchor="middle" fill="#9b9b9b" textLength="30.1" lengthAdjust="spacingAndGlyphs">12:00</text>
<text stroke="#9b9b9b" stroke-width="0.18" x="1398.86" y="495.8" font-size="12" text-anchor="middle" fill="#9b9b9b" textLength="30.1" lengthAdjust="spacingAndGlyphs">16:00</text>
<text stroke="#9b9b9b" stroke-width="0.18" x="1480.82" y="495.8" font-size="12" text-anchor="middle" fill="#9b9b9b" textLength="30.1" lengthAdjust="spacingAndGlyphs">20:00</text>
<text stroke="#9b9b9b" stroke-width="0.18" x="1562.78" y="495.8" font-size="12" font-weight="bold" text-anchor="middle" fill="#9b9b9b" textLength="44.5" lengthAdjust="spacingAndGlyphs">29. Aug.</text>
<text stroke="#9b9b9b" stroke-width="0.18" x="1644.7399999999998" y="495.8" font-size="12" text-anchor="middle" fill="#9b9b9b" textLength="30.1" lengthAdjust="spacingAndGlyphs">04:00</text>
<text stroke="#9b9b9b" stroke-width="0.18" x="1726.6999999999998" y="495.8" font-size="12" text-anchor="middle" fill="#9b9b9b" textLength="30.1" lengthAdjust="spacingAndGlyphs">08:00</text>
<text stroke="#9b9b9b" stroke-width="0.18" x="1808.6599999999999" y="495.8" font-size="12" text-anchor="middle" fill="#9b9b9b" textLength="30.1" lengthAdjust="spacingAndGlyphs">12:00</text>
<text stroke="#9b9b9b" stroke-width="0.18" x="1890.62" y="495.8" font-size="12" text-anchor="middle" fill="#9b9b9b" textLength="30.1" lengthAdjust="spacingAndGlyphs">16:00</text>
<text stroke="#9b9b9b" stroke-width="0.18" x="1972.58" y="495.8" font-size="12" text-anchor="middle" fill="#9b9b9b" textLength="30.1" lengthAdjust="spacingAndGlyphs">20:00</text>
<text stroke="#9b9b9b" stroke-width="0.18" transform="translate(52.5,293.5) rotate(-90)" font-size="12" text-anchor="middle" fill="#9b9b9b">%</text>
<text stroke="#9b9b9b" stroke-width="0.18" x="76.8" y="566.0" font-size="12" text-anchor="end" fill="#9b9b9b">120.000</text>
<text stroke="#9b9b9b" stroke-width="0.18" x="76.8" y="626.0" font-size="12" text-anchor="end" fill="#9b9b9b">100.000</text>
<text stroke="#9b9b9b" stroke-width="0.18" x="76.8" y="686.0" font-size="12" text-anchor="end" fill="#9b9b9b">80.000</text>
<text stroke="#9b9b9b" stroke-width="0.18" x="76.8" y="746.0" font-size="12" text-anchor="end" fill="#9b9b9b">60.000</text>
<text stroke="#9b9b9b" stroke-width="0.18" x="76.8" y="807.0" font-size="12" text-anchor="end" fill="#9b9b9b">40.000</text>
<text stroke="#9b9b9b" stroke-width="0.18" x="76.8" y="867.0" font-size="12" text-anchor="end" fill="#9b9b9b">20.000</text>
<text stroke="#9b9b9b" stroke-width="0.18" x="76.8" y="927.0" font-size="12" text-anchor="end" fill="#9b9b9b">0</text>
<text stroke="#9b9b9b" stroke-width="0.18" x="87.5" y="944.8" font-size="12" font-weight="bold" text-anchor="middle" fill="#9b9b9b" textLength="44.5" lengthAdjust="spacingAndGlyphs">26. Aug.</text>
<text stroke="#9b9b9b" stroke-width="0.18" x="169.45999999999998" y="944.8" font-size="12" text-anchor="middle" fill="#9b9b9b" textLength="30.1" lengthAdjust="spacingAndGlyphs">04:00</text>
<text stroke="#9b9b9b" stroke-width="0.18" x="251.42" y="944.8" font-size="12" text-anchor="middle" fill="#9b9b9b" textLength="30.1" lengthAdjust="spacingAndGlyphs">08:00</text>
<text stroke="#9b9b9b" stroke-width="0.18" x="333.38" y="944.8" font-size="12" text-anchor="middle" fill="#9b9b9b" textLength="30.1" lengthAdjust="spacingAndGlyphs">12:00</text>
<text stroke="#9b9b9b" stroke-width="0.18" x="415.34" y="944.8" font-size="12" text-anchor="middle" fill="#9b9b9b" textLength="30.1" lengthAdjust="spacingAndGlyphs">16:00</text>
<text stroke="#9b9b9b" stroke-width="0.18" x="497.29999999999995" y="944.8" font-size="12" text-anchor="middle" fill="#9b9b9b" textLength="30.1" lengthAdjust="spacingAndGlyphs">20:00</text>
<text stroke="#9b9b9b" stroke-width="0.18" x="579.26" y="944.8" font-size="12" font-weight="bold" text-anchor="middle" fill="#9b9b9b" textLength="44.5" lengthAdjust="spacingAndGlyphs">27. Aug.</text>
<text stroke="#9b9b9b" stroke-width="0.18" x="661.2199999999999" y="944.8" font-size="12" text-anchor="middle" fill="#9b9b9b" textLength="30.1" lengthAdjust="spacingAndGlyphs">04:00</text>
<text stroke="#9b9b9b" stroke-width="0.18" x="743.18" y="944.8" font-size="12" text-anchor="middle" fill="#9b9b9b" textLength="30.1" lengthAdjust="spacingAndGlyphs">08:00</text>
<text stroke="#9b9b9b" stroke-width="0.18" x="825.14" y="944.8" font-size="12" text-anchor="middle" fill="#9b9b9b" textLength="30.1" lengthAdjust="spacingAndGlyphs">12:00</text>
<text stroke="#9b9b9b" stroke-width="0.18" x="907.0999999999999" y="944.8" font-size="12" text-anchor="middle" fill="#9b9b9b" textLength="30.1" lengthAdjust="spacingAndGlyphs">16:00</text>
<text stroke="#9b9b9b" stroke-width="0.18" x="989.06" y="944.8" font-size="12" text-anchor="middle" fill="#9b9b9b" textLength="30.1" lengthAdjust="spacingAndGlyphs">20:00</text>
<text stroke="#9b9b9b" stroke-width="0.18" x="1071.02" y="944.8" font-size="12" font-weight="bold" text-anchor="middle" fill="#9b9b9b" textLength="44.5" lengthAdjust="spacingAndGlyphs">28. Aug.</text>
<text stroke="#9b9b9b" stroke-width="0.18" x="1152.98" y="944.8" font-size="12" text-anchor="middle" fill="#9b9b9b" textLength="30.1" lengthAdjust="spacingAndGlyphs">04:00</text>
<text stroke="#9b9b9b" stroke-width="0.18" x="1234.9399999999998" y="944.8" font-size="12" text-anchor="middle" fill="#9b9b9b" textLength="30.1" lengthAdjust="spacingAndGlyphs">08:00</text>
<text stroke="#9b9b9b" stroke-width="0.18" x="1316.8999999999999" y="944.8" font-size="12" text-anchor="middle" fill="#9b9b9b" textLength="30.1" lengthAdjust="spacingAndGlyphs">12:00</text>
<text stroke="#9b9b9b" stroke-width="0.18" x="1398.86" y="944.8" font-size="12" text-anchor="middle" fill="#9b9b9b" textLength="30.1" lengthAdjust="spacingAndGlyphs">16:00</text>
<text stroke="#9b9b9b" stroke-width="0.18" x="1480.82" y="944.8" font-size="12" text-anchor="middle" fill="#9b9b9b" textLength="30.1" lengthAdjust="spacingAndGlyphs">20:00</text>
<text stroke="#9b9b9b" stroke-width="0.18" x="1562.78" y="944.8" font-size="12" font-weight="bold" text-anchor="middle" fill="#9b9b9b" textLength="44.5" lengthAdjust="spacingAndGlyphs">29. Aug.</text>
<text stroke="#9b9b9b" stroke-width="0.18" x="1644.7399999999998" y="944.8" font-size="12" text-anchor="middle" fill="#9b9b9b" textLength="30.1" lengthAdjust="spacingAndGlyphs">04:00</text>
<text stroke="#9b9b9b" stroke-width="0.18" x="1726.6999999999998" y="944.8" font-size="12" text-anchor="middle" fill="#9b9b9b" textLength="30.1" lengthAdjust="spacingAndGlyphs">08:00</text>
<text stroke="#9b9b9b" stroke-width="0.18" x="1808.6599999999999" y="944.8" font-size="12" text-anchor="middle" fill="#9b9b9b" textLength="30.1" lengthAdjust="spacingAndGlyphs">12:00</text>
<text stroke="#9b9b9b" stroke-width="0.18" x="1890.62" y="944.8" font-size="12" text-anchor="middle" fill="#9b9b9b" textLength="30.1" lengthAdjust="spacingAndGlyphs">16:00</text>
<text stroke="#9b9b9b" stroke-width="0.18" x="1972.58" y="944.8" font-size="12" text-anchor="middle" fill="#9b9b9b" textLength="30.1" lengthAdjust="spacingAndGlyphs">20:00</text>
<text stroke="#9b9b9b" stroke-width="0.18" transform="translate(22.5,742.5) rotate(-90)" font-size="12" text-anchor="middle" fill="#9b9b9b">lx</text>
</g>

</svg>
<div class="lg" style="left:937px;top:81px;letter-spacing:-0.069px">Ehingen/Donau Bewölkungsgrad</div>
<div class="lg" style="left:896.5px;top:530px;letter-spacing:-0.03px">Illuminance</div>
<div class="lg" style="left:1006px;top:530px;letter-spacing:-0.263px">WS2900_V2.02.03 Solar Lux</div>
</body></html>
